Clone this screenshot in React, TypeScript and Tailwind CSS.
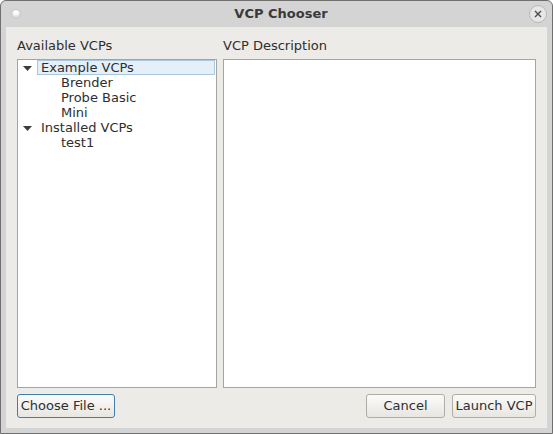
import { useState } from "react";

const tree = [
    { id: "example", label: "Example VCPs", children: ["Brender", "Probe Basic", "Mini"] },
    { id: "installed", label: "Installed VCPs", children: ["test1"] },
];

const Caret = () => (
    <svg width="9" height="5" viewBox="0 0 9 5" className="shrink-0">
        <path d="M0 0 H9 L4.5 5 Z" fill="#3c3c3c" />
    </svg>
);

const App = () => {
    const [selected, setSelected] = useState("example");

    return (
        <div className="w-[553px] h-[434px] bg-[#d4d4d4] border border-[#6f6f6f] rounded-t-[6px] flex flex-col overflow-hidden font-['DejaVu_Sans',sans-serif] text-[13px] text-[#2e2e2e]">
            {/* title bar */}
            <div className="h-[26px] shrink-0 flex items-center justify-between px-[10px]">
                <span className="w-[10px] h-[10px] rounded-full bg-white border border-[#c4c4c4] shadow-[inset_0_-2px_3px_#d0d0d0]" />
                <span className="font-bold text-[13px] text-[#3a3a3a] ml-[12px]">VCP Chooser</span>
                <span className="w-[18px] h-[18px] -mr-[5px] rounded-full bg-[#e6e6e6] border border-[#b8b8b8] flex items-center justify-center">
                    <svg width="8" height="8" viewBox="0 0 8 8">
                        <path d="M1 1 L7 7 M7 1 L1 7" stroke="#4a4a4a" strokeWidth="1.4" />
                    </svg>
                </span>
            </div>

            {/* body */}
            <div className="flex-1 mx-[5px] mb-[5px] bg-[#edebe7] flex flex-col px-[11px] pt-[10px] pb-[10px]">
                <div className="flex gap-[6px] flex-1">
                    <div className="w-[200px] flex flex-col">
                        <div className="h-[22px] leading-[17px]">Available VCPs</div>
                        <div className="flex-1 bg-white border border-[#a4a4a4] pr-px">
                            {tree.map(node => (
                                <div key={node.id}>
                                    <div className="h-[15px] flex items-center">
                                        <span className="w-[19px] flex justify-center pt-px"><Caret /></span>
                                        <span
                                            onClick={() => setSelected(node.id)}
                                            className={`flex-1 h-[15px] leading-[13px] pl-[3px] border ${selected === node.id ? "bg-[#e4eff8] border-[#a9c8df]" : "border-transparent"}`}
                                        >
                                            {node.label}
                                        </span>
                                    </div>
                                    {node.children.map(c => (
                                        <div key={c} className="h-[15px] leading-[15px] pl-[43px]">{c}</div>
                                    ))}
                                </div>
                            ))}
                        </div>
                    </div>
                    <div className="flex-1 flex flex-col">
                        <div className="h-[22px] leading-[17px]">VCP Description</div>
                        <div className="flex-1 bg-white border border-[#a4a4a4]" />
                    </div>
                </div>

                {/* buttons */}
                <div className="flex items-end justify-between mt-[6px]">
                    <button className="h-[24px] w-[98px] rounded-[3px] border border-[#3f7fae] bg-gradient-to-b from-[#fbfbfa] to-[#e8e6e2] text-[13px] leading-[20px]">
                        Choose File ...
                    </button>
                    <div className="flex gap-[7px]">
                        <button className="h-[24px] w-[79px] rounded-[3px] border border-[#b0aca6] bg-gradient-to-b from-[#fbfbfa] to-[#e8e6e2] text-[13px] leading-[20px]">
                            Cancel
                        </button>
                        <button className="h-[24px] w-[84px] rounded-[3px] border border-[#b0aca6] bg-gradient-to-b from-[#fbfbfa] to-[#e8e6e2] text-[13px] leading-[20px]">
                            Launch VCP
                        </button>
                    </div>
                </div>
            </div>
        </div>
    );
};

export default App;
